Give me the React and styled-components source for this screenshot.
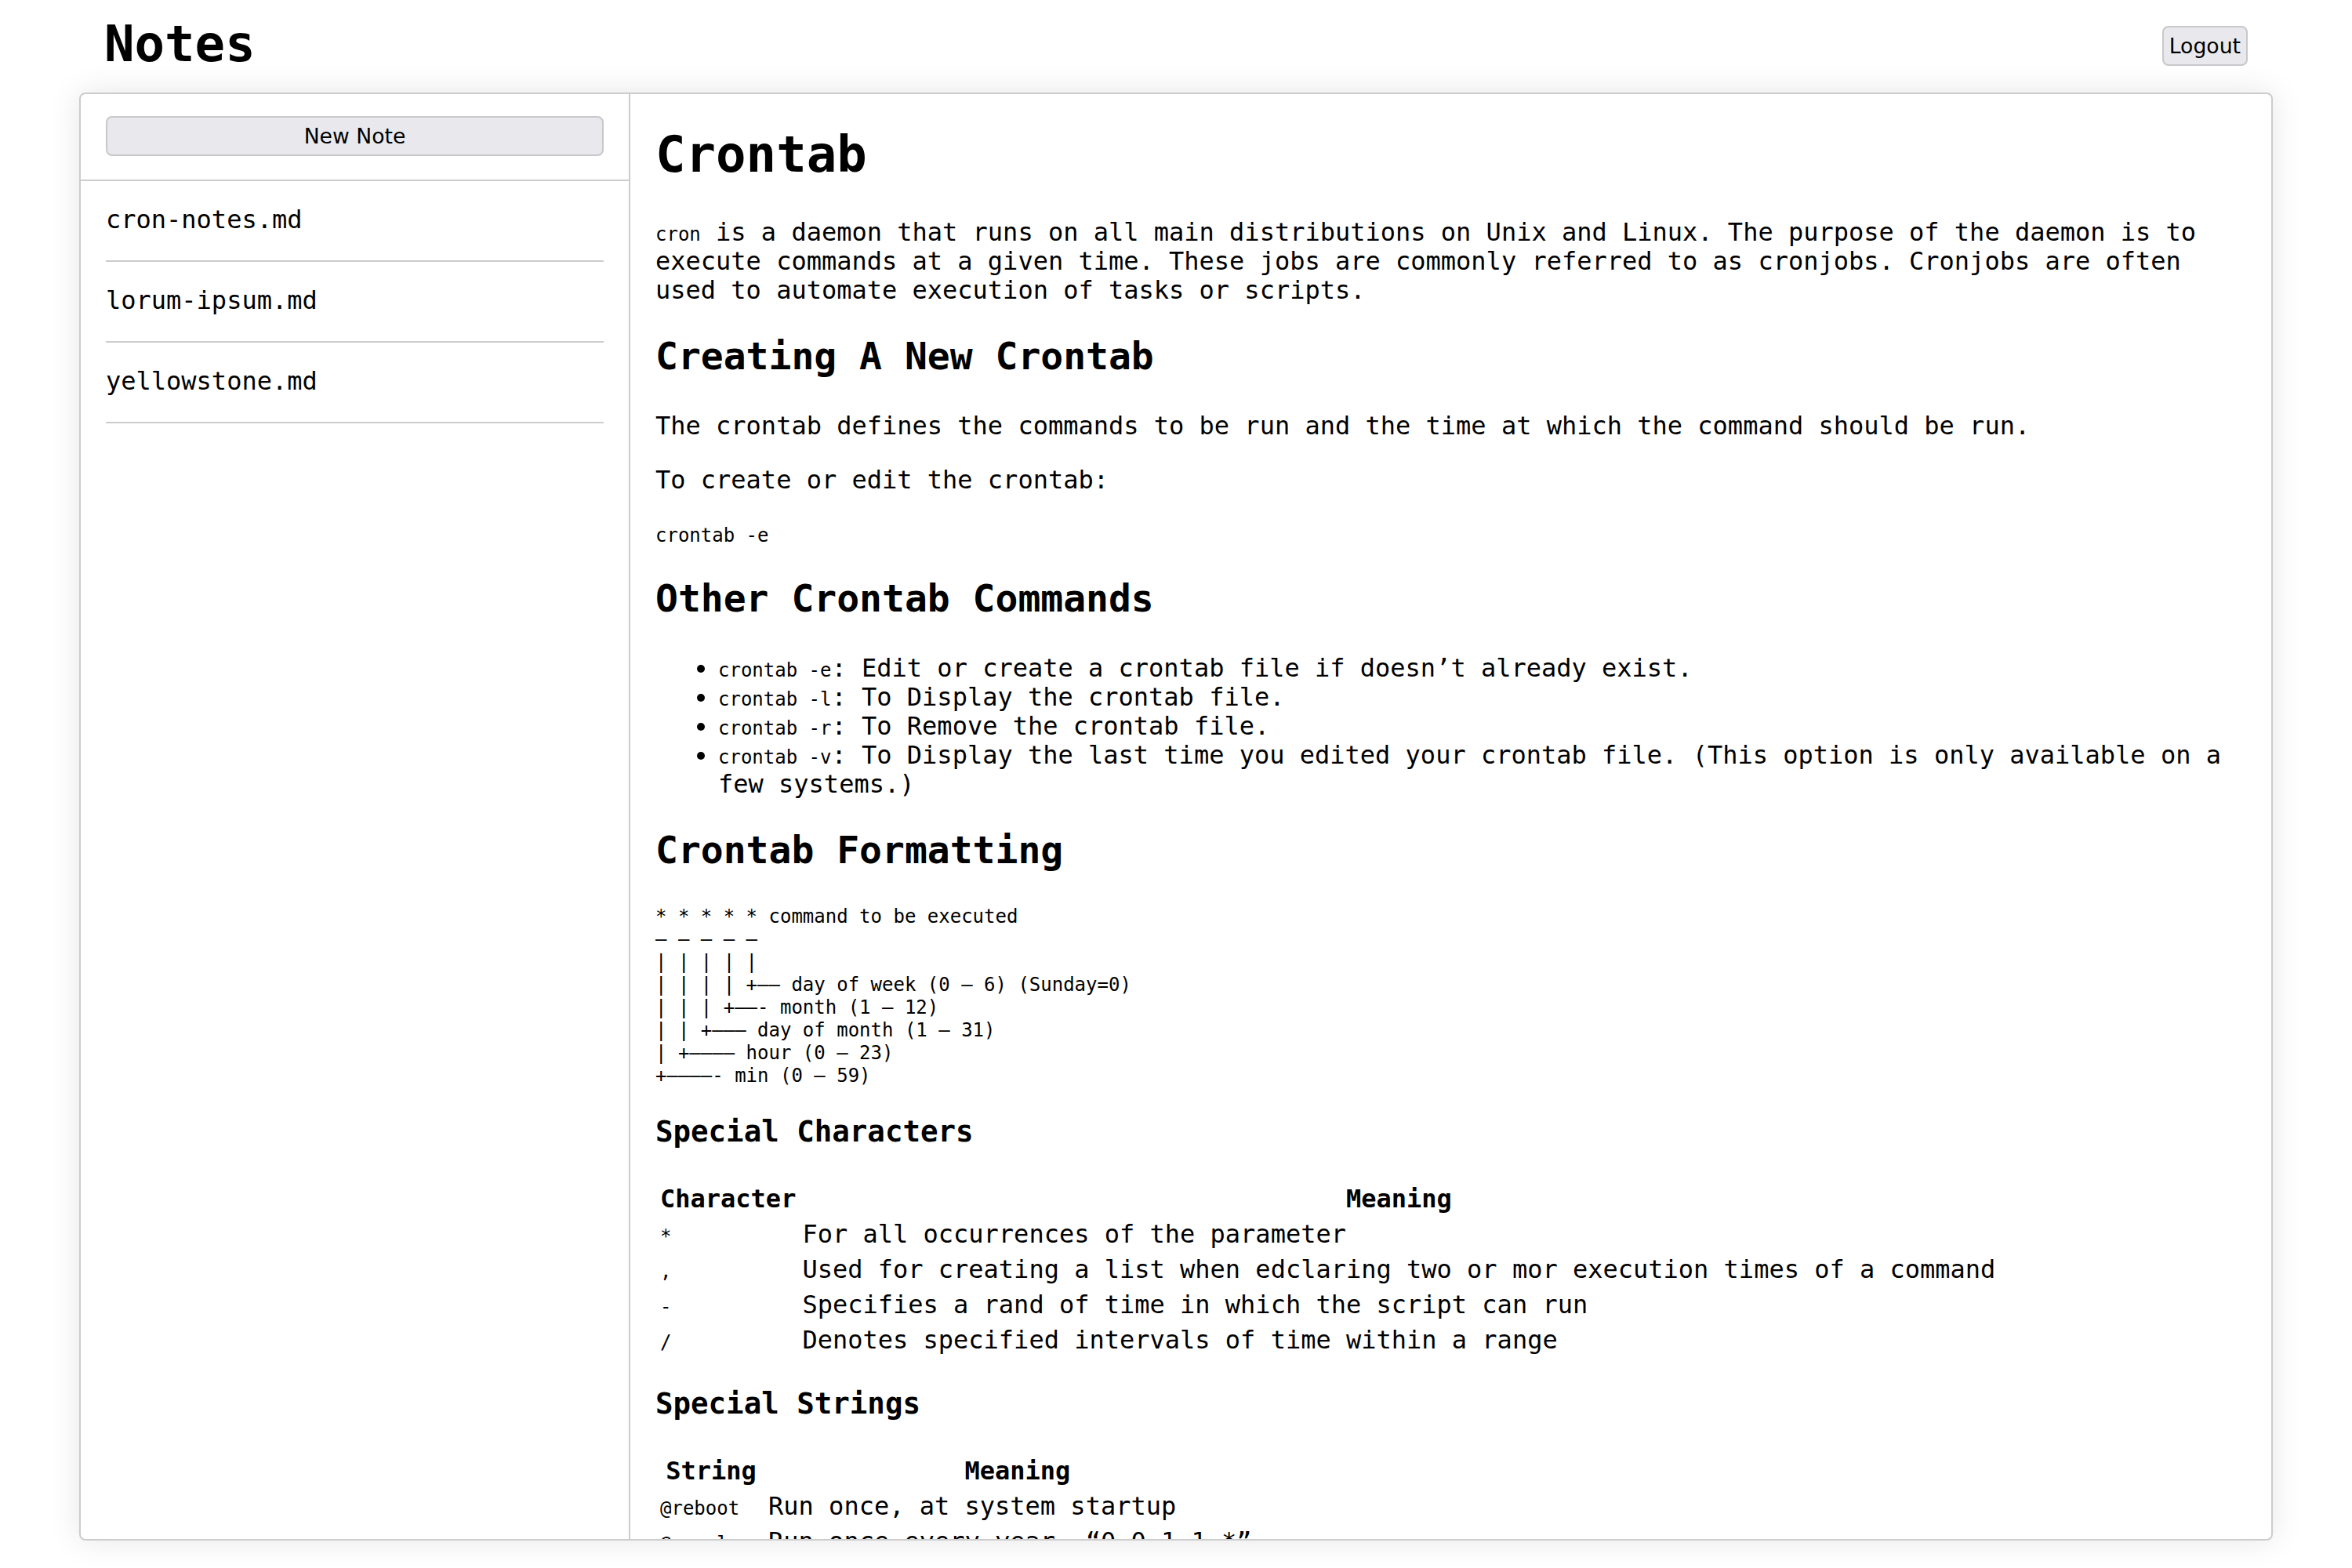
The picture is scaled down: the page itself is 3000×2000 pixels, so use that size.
import React from "react";
import styled, { createGlobalStyle } from "styled-components";

const GlobalStyle = createGlobalStyle`
  html, body {
    margin: 0;
    padding: 0;
    background: #ffffff;
  }
  body {
    font-family: "DejaVu Sans Mono", monospace;
    color: #000000;
  }
  * { box-sizing: border-box; }
`;

const Page = styled.div`
  height: 100vh;
  display: flex;
  flex-direction: column;
  padding: 0 101px;
`;

const Header = styled.header`
  flex: 0 0 118px;
  display: flex;
  align-items: flex-start;
  justify-content: space-between;
  padding: 0 32px;
`;

const Title = styled.h1`
  margin: 19px 0 0;
  font-family: "DejaVu Sans Mono", monospace;
  font-size: 64px;
  font-weight: bold;
  line-height: 74px;
`;

const Button = styled.button`
  font-family: "DejaVu Sans", sans-serif;
  font-size: 26.67px;
  line-height: 31px;
  color: #000;
  background: #e9e9ed;
  border: 2px solid #c8c8cc;
  border-radius: 8px;
  padding: 8px 7px;
  margin: ${(p) => (p.$top ? `${p.$top}px` : "0")} 0 0;
  width: ${(p) => (p.$block ? "100%" : "auto")};
  cursor: pointer;
`;

const Shell = styled.main`
  flex: 1 1 auto;
  min-height: 0;
  display: flex;
  margin-bottom: 35px;
  border: 2px solid #cccccc;
  border-radius: 8px;
  box-shadow: 0 0 40px rgba(0, 0, 0, 0.1);
  overflow: hidden;
  background: #fff;
`;

const Sidebar = styled.aside`
  flex: 0 0 701px;
  border-right: 2px solid #cccccc;
  display: flex;
  flex-direction: column;
`;

const SidebarTop = styled.div`
  padding: 28px 32px 30px;
  border-bottom: 2px solid #cccccc;
`;

const NoteList = styled.ul`
  list-style: none;
  margin: 0;
  padding: 0 32px;
`;

const NoteItem = styled.li`
  font-size: 32px;
  line-height: 37px;
  padding: 31px 0 33px;
  border-bottom: 2px solid #cccccc;
  cursor: pointer;
`;

const Content = styled.article`
  flex: 1 1 auto;
  min-width: 0;
  overflow: hidden;
  padding: 0 32px;
  font-size: 32px;
  line-height: 37px;
`;

const H1 = styled.h1`
  font-size: 64px;
  line-height: 74px;
  margin: 40px 0 44px;
`;

const H2 = styled.h2`
  font-size: 48px;
  line-height: 56px;
  margin: 37px 0 43px;
`;

const H3 = styled.h3`
  font-size: 37.44px;
  line-height: 44px;
  margin: 34px 0 40px;
`;

const P = styled.p`
  margin: 32px 0;
`;

const Code = styled.code`
  font-family: "DejaVu Sans Mono", monospace;
  font-size: 24px;
  line-height: 1;
`;

const Pre = styled.pre`
  font-family: "DejaVu Sans Mono", monospace;
  font-size: 24px;
  line-height: 29px;
  margin: 38px 0 24px;
`;

const List = styled.ul`
  margin: 32px 0;
  padding-left: 80px;
  list-style: disc;
`;

const Table = styled.table`
  border-spacing: 4px;
  font-size: 32px;
  line-height: 37px;
  font-family: "DejaVu Sans Mono", monospace;
`;

const Th = styled.th`
  padding: 2px;
  font-weight: bold;
  text-align: center;
`;

const Td = styled.td`
  padding: 2px;
  text-align: left;
`;

const notes = ["cron-notes.md", "lorum-ipsum.md", "yellowstone.md"];

const commands = [
  ["crontab -e", "Edit or create a crontab file if doesn’t already exist."],
  ["crontab -l", "To Display the crontab file."],
  ["crontab -r", "To Remove the crontab file."],
  [
    "crontab -v",
    "To Display the last time you edited your crontab file. (This option is only available on a few systems.)",
  ],
];

const formatBlock = `* * * * * command to be executed
– – – – –
| | | | |
| | | | +—– day of week (0 – 6) (Sunday=0)
| | | +—–- month (1 – 12)
| | +——– day of month (1 – 31)
| +———– hour (0 – 23)
+————- min (0 – 59)`;

const specialChars = [
  ["*", "For all occurrences of the parameter"],
  [",", "Used for creating a list when edclaring two or mor execution times of a command"],
  ["-", "Specifies a rand of time in which the script can run"],
  ["/", "Denotes specified intervals of time within a range"],
];

const specialStrings = [
  ["@reboot", "Run once, at system startup"],
  ["@yearly", "Run once every year, “0 0 1 1 *”"],
  ["@annually", "(same as @yearly)"],
  ["@monthly", "Run once every month, “0 0 1 * *”"],
  ["@weekly", "Run once every week, “0 0 * * 0”"],
  ["@daily", "Run once each day, “0 0 * * *”"],
  ["@midnight", "(same as @daily)"],
  ["@hourly", "Run once an hour, “0 * * * *”"],
];

export default function App() {
  return (
    <>
      <GlobalStyle />
      <Page>
        <Header>
          <Title>Notes</Title>
          <Button $top={33}>Logout</Button>
        </Header>
        <Shell>
          <Sidebar>
            <SidebarTop>
              <Button $block>New Note</Button>
            </SidebarTop>
            <NoteList>
              {notes.map((n) => (
                <NoteItem key={n}>{n}</NoteItem>
              ))}
            </NoteList>
          </Sidebar>
          <Content>
            <H1>Crontab</H1>
            <P>
              <Code>cron</Code> is a daemon that runs on all main distributions on Unix and
              Linux. The purpose of the daemon is to execute commands at a given time. These
              jobs are commonly referred to as cronjobs. Cronjobs are often used to automate
              execution of tasks or scripts.
            </P>
            <H2>Creating A New Crontab</H2>
            <P>The crontab defines the commands to be run and the time at which the command should be run.</P>
            <P>To create or edit the crontab:</P>
            <Pre>crontab -e</Pre>
            <H2>Other Crontab Commands</H2>
            <List>
              {commands.map(([c, d]) => (
                <li key={c}>
                  <Code>{c}</Code>: {d}
                </li>
              ))}
            </List>
            <H2>Crontab Formatting</H2>
            <Pre>{formatBlock}</Pre>
            <H3>Special Characters</H3>
            <Table>
              <thead>
                <tr>
                  <Th>Character</Th>
                  <Th>Meaning</Th>
                </tr>
              </thead>
              <tbody>
                {specialChars.map(([c, m]) => (
                  <tr key={c}>
                    <Td>
                      <Code>{c}</Code>
                    </Td>
                    <Td>{m}</Td>
                  </tr>
                ))}
              </tbody>
            </Table>
            <H3>Special Strings</H3>
            <Table>
              <thead>
                <tr>
                  <Th>String</Th>
                  <Th>Meaning</Th>
                </tr>
              </thead>
              <tbody>
                {specialStrings.map(([s, m]) => (
                  <tr key={s}>
                    <Td>
                      <Code>{s}</Code>
                    </Td>
                    <Td>{m}</Td>
                  </tr>
                ))}
              </tbody>
            </Table>
          </Content>
        </Shell>
      </Page>
    </>
  );
}
